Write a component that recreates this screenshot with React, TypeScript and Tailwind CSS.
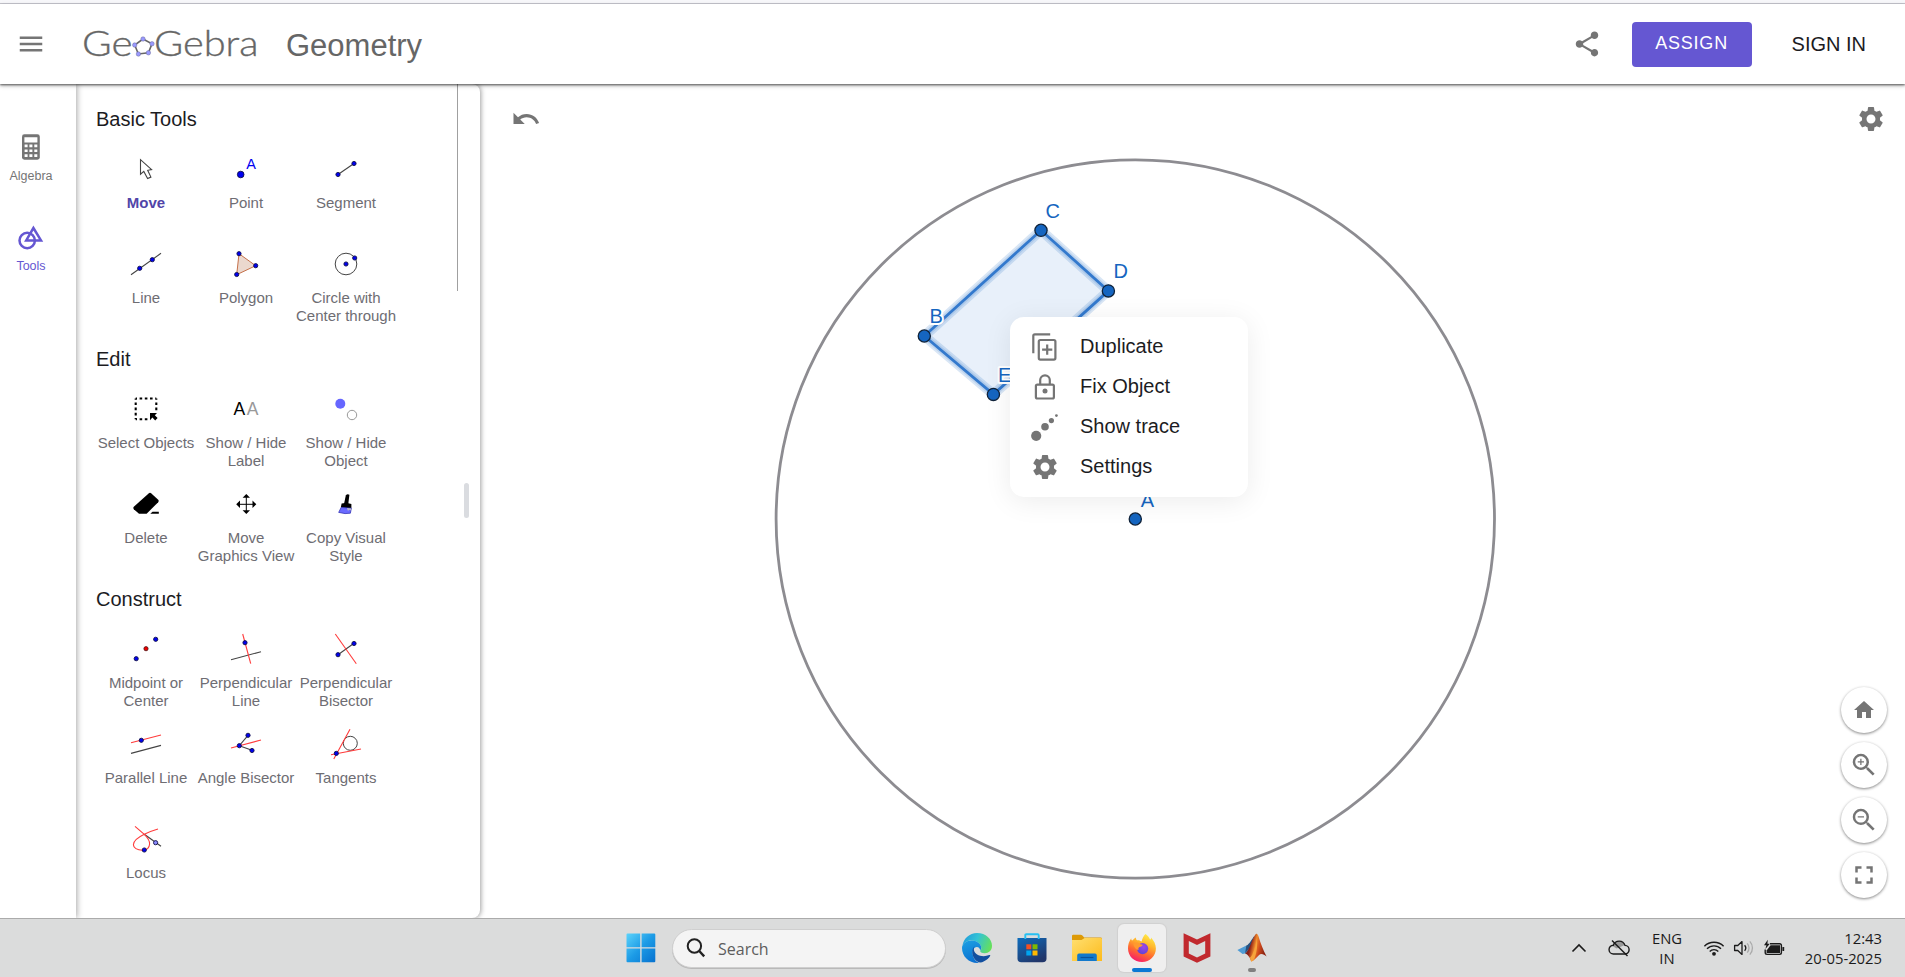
import type { ReactNode } from "react";
import {
  MdFullscreen,
  MdHome,
  MdMenu,
  MdSettings,
  MdShare,
  MdUndo,
  MdZoomIn,
  MdZoomOut,
} from "react-icons/md";

const RED = "#ff3b3b";
const DARK = "#444";

function Dot({ x, y, r = 2.1, fill = "#0000f0" }: { x: number; y: number; r?: number; fill?: string }) {
  return <circle cx={x} cy={y} r={r} fill={fill} stroke="#10104a" strokeWidth="0.9" />;
}

function Ln({ d, c = DARK }: { d: string; c?: string }) {
  return <path d={d} stroke={c} strokeWidth="1.1" fill="none" />;
}

type Tool = { label: string; icon: ReactNode; active?: boolean };

const basicTools: Tool[] = [
  {
    label: "Move",
    active: true,
    icon: (
      <path
        d="M-5.5 -9.3V5.2L-2.2 2.4L1.6 9.5L4.9 8.1L1.7 1.3L5.6 0.6Z"
        fill="#fff"
        stroke="#444"
        strokeWidth="1.1"
      />
    ),
  },
  {
    label: "Point",
    icon: (
      <>
        <Dot x={-5.3} y={5.5} r={3.3} />
        <text x="5" y="0.2" fontSize="14.5" textAnchor="middle" fill="#0000f0">
          A
        </text>
      </>
    ),
  },
  {
    label: "Segment",
    icon: (
      <>
        <Ln d="M-8 5.5L8 -5.5" />
        <Dot x={-8} y={5.5} />
        <Dot x={8} y={-5.5} />
      </>
    ),
  },
  {
    label: "Line",
    icon: (
      <>
        <Ln d="M-15 10.7L15 -10.7" />
        <Dot x={-6.3} y={4.3} />
        <Dot x={6.3} y={-4.3} />
      </>
    ),
  },
  {
    label: "Polygon",
    icon: (
      <>
        <path d="M-7 -10.3L9.7 1.7L-9.3 10.7Z" fill="#ebd8ce" stroke="#c4704a" strokeWidth="1" />
        <Dot x={-7} y={-10.3} />
        <Dot x={9.7} y={1.7} />
        <Dot x={-9.3} y={10.5} />
      </>
    ),
  },
  {
    label: "Circle with\nCenter through",
    icon: (
      <>
        <circle r="10.8" fill="none" stroke={DARK} strokeWidth="1" />
        <Dot x={0} y={0} />
        <Dot x={8.7} y={-6} />
      </>
    ),
  },
];

const editTools: Tool[] = [
  {
    label: "Select Objects",
    icon: (
      <>
        <path
          d="M-10.3 -10.5H10.3M-10.3 10.3H3M-10.3 -10.5V10.3M10.3 -10.5V3"
          fill="none"
          stroke="#000"
          strokeWidth="2.1"
          strokeDasharray="2.6 2.6"
          strokeDashoffset="1.3"
        />
        <path d="M4 4H11L8.8 6.2L11.6 9L9.2 11.4L6.4 8.6L4 11.2Z" fill="#000" />
      </>
    ),
  },
  {
    label: "Show / Hide\nLabel",
    icon: (
      <>
        <text x="-6.6" y="6.2" fontSize="17.5" textAnchor="middle" fill="#000">
          A
        </text>
        <text x="6.6" y="6.2" fontSize="17.5" textAnchor="middle" fill="#999">
          A
        </text>
      </>
    ),
  },
  {
    label: "Show / Hide\nObject",
    icon: (
      <>
        <circle cx="-5.7" cy="-5.3" r="5" fill="#6666ff" />
        <circle cx="6" cy="6" r="4.7" fill="none" stroke="#999" strokeWidth="1" />
      </>
    ),
  },
  {
    label: "Delete",
    icon: (
      <>
        <path
          d="M2.6 -10.6Q4 -11.8 5.4 -10.6L12.2 -4.2Q13.2 -3 12.2 -1.8L0.6 9.7H-7L-12.2 5.2Q-13.2 4 -12.2 2.8Z"
          fill="#000"
        />
        <path d="M4.3 9.7L6.5 7.7H12.8V9.7Z" fill="#000" />
      </>
    ),
  },
  {
    label: "Move\nGraphics View",
    icon: (
      <>
        <path d="M0.3 -7V7M-7 0.3H7" stroke="#000" strokeWidth="1" />
        <path
          d="M0.3 -10L4 -6.2H-3.4ZM0.3 10L4 6.2H-3.4ZM-9.8 0.2L-6 -3.5V3.9ZM10.3 0.2L6.5 -3.5V3.9Z"
          fill="#000"
        />
      </>
    ),
  },
  {
    label: "Copy Visual\nStyle",
    icon: (
      <>
        <path d="M-0.2 -8.4Q1.2 -10.6 3.4 -9.2L2.3 0H-2Z" fill="#000" />
        <path d="M-4.4 -0.6Q0 -1.6 5.4 0L5.4 4.4L-5.2 3.6Z" fill="#000" />
        <path d="M-4.8 3.4L5.3 4.2L4.4 9.2L-1 9.6L-7.3 8.4Z" fill="#6a6aff" stroke="#3535b8" strokeWidth="0.8" />
        <path d="M0.9 4L5.2 4.4L4.9 6.4L3.2 5.8L2 7Z" fill="#b8b8c8" />
      </>
    ),
  },
];

const constructTools: Tool[] = [
  {
    label: "Midpoint or\nCenter",
    icon: (
      <>
        <Dot x={9.7} y={-9.7} />
        <circle cx="0" cy="-0.3" r="2.1" fill="#f00000" stroke="#4a1010" strokeWidth="0.8" />
        <Dot x={-9.8} y={9.7} />
      </>
    ),
  },
  {
    label: "Perpendicular\nLine",
    icon: (
      <>
        <Ln d="M-15 10.7L15 2.7" />
        <Ln d="M-3.3 -15L4.7 14.7" c={RED} />
        <Dot x={-1} y={-6.3} />
      </>
    ),
  },
  {
    label: "Perpendicular\nBisector",
    icon: (
      <>
        <Ln d="M-8 5.7L8 -5.7" />
        <Ln d="M-10.7 -15L10.3 14.7" c={RED} />
        <Dot x={-8} y={5.7} />
        <Dot x={8} y={-5.5} />
      </>
    ),
  },
  {
    label: "Parallel Line",
    icon: (
      <>
        <Ln d="M-15 -1.3L15 -9" c={RED} />
        <Ln d="M-15 9.4L15 1.4" />
        <Dot x={-4.7} y={-3.7} />
      </>
    ),
  },
  {
    label: "Angle Bisector",
    icon: (
      <>
        <Ln d="M2 -8.7L-6.7 1.7L6 6.3" />
        <Ln d="M-15 4L15 -4" c={RED} />
        <Dot x={-6.7} y={1.7} />
        <Dot x={2} y={-8.7} />
        <Dot x={6} y={6.5} />
      </>
    ),
  },
  {
    label: "Tangents",
    icon: (
      <>
        <circle cx="4.3" cy="-0.7" r="7" fill="none" stroke={DARK} strokeWidth="1" />
        <Ln d="M-15 10.7L15 5M-12.2 15L4 -14.8" c={RED} />
        <Dot x={-9.7} y={9.4} />
      </>
    ),
  },
  {
    label: "Locus",
    icon: (
      <>
        <Ln d="M-1.7 -4.7L15 7.3" />
        <Ln
          d="M-11 -12.7L-1.7 -4.7C2.5 -0.6 3.8 2 3.6 5C3.3 9.2 0.8 11.2 -3.5 11.2C-9 11.2 -12.6 8.8 -12.6 5.8C-12.6 2.2 -8.5 -1.4 -1.7 -4.7C3 -7 7 -8.6 12 -10"
          c={RED}
        />
        <Dot x={9.6} y={3.7} fill="#8a8aff" r={2.1} />
        <Dot x={-1.7} y={11} />
      </>
    ),
  },
];

function Section({ title, tools }: { title: string; tools: Tool[] }) {
  return (
    <section className="mb-2.5">
      <h2 className="mb-5 text-[20px] leading-5 text-[#1c1c1f]">{title}</h2>
      <div className="grid w-[300px] grid-cols-3">
        {tools.map((t) => (
          <div key={t.label} className="flex h-[95px] flex-col items-center">
            <svg width="40" height="40" viewBox="-20 -20 40 40">
              {t.icon}
            </svg>
            <span
              className={
                "mt-[5px] text-center text-[15px] leading-[18px] whitespace-pre " +
                (t.active ? "font-bold text-[#5145a8]" : "text-[#6e6d73]")
              }
            >
              {t.label}
            </span>
          </div>
        ))}
      </div>
    </section>
  );
}

function Logo() {
  const pts: [number, number][] = [
    [143, 39],
    [152, 43.8],
    [148.4, 52.8],
    [138.4, 54],
    [134.7, 45],
  ];
  return (
    <svg className="ml-[33px] shrink-0" width="186" height="50" viewBox="79 19 186 50">
      <g fill="#666" stroke="#666" strokeWidth="0.35" fontFamily="Lato, sans-serif" fontWeight="300" fontSize="34.5">
        <text x="82" y="55.5" textLength="50.5" lengthAdjust="spacingAndGlyphs">
          Ge
        </text>
        <text x="154" y="55.5" textLength="104.5" lengthAdjust="spacingAndGlyphs">
          Gebra
        </text>
      </g>
      <polygon points={pts.map((p) => p.join(",")).join(" ")} fill="none" stroke="#666" strokeWidth="1.6" />
      {pts.map(([x, y]) => (
        <circle key={x} cx={x} cy={y} r="2.2" fill="#9999ff" stroke="#6a6a9a" strokeWidth="0.5" />
      ))}
    </svg>
  );
}

function Header() {
  return (
    <header className="relative z-20 flex h-20 shrink-0 items-center bg-white pb-px pl-4 text-[#666] shadow-[0_1px_2px_rgba(0,0,0,0.55),0_2px_4px_rgba(0,0,0,0.25)]">
      <MdMenu size={30} className="text-[#757575]" />
      <div className="flex items-center">
        <Logo />
        <span className="ml-[21px] pt-1 text-[31px] leading-9">Geometry</span>
      </div>
      <div className="ml-auto flex items-center">
        <MdShare size={30} className="mr-[30px] text-[#757575]" />
        <button className="mt-0.5 h-[45px] w-[120px] rounded bg-[#6557d2] pb-0.5 text-[18px] tracking-[0.8px] text-white">
          ASSIGN
        </button>
        <span className="mr-[39px] ml-10 text-[20px] text-[#1c1c1f]">SIGN IN</span>
      </div>
    </header>
  );
}

function NavRail() {
  return (
    <nav className="relative z-10 flex w-[76px] shrink-0 flex-col gap-[38px] bg-white pt-12 pr-[14px] text-center text-[12.5px] leading-4 shadow-[1px_0_6px_rgba(0,0,0,0.35)]">
      <div className="flex flex-col items-center text-[#757575]">
        <svg width="30" height="30" viewBox="0 0 30 30">
          <rect x="6" y="2.3" width="17.8" height="25.4" rx="2.4" fill="#757575" />
          <path
            d="M8.4 5.2h13v5.3h-13zM8.6 12.6h3v2.6h-3zM13.4 12.6h3v2.6h-3zM18.3 12.6h3v2.6h-3zM8.6 17.4h3v2.6h-3zM13.4 17.4h3v2.6h-3zM18.3 17.4h3v2.6h-3zM8.6 22.3h3v2.6h-3zM13.4 22.3h3v2.6h-3zM18.3 22.3h3v2.6h-3z"
            fill="#fff"
          />
        </svg>
        <span className="mt-1.5">Algebra</span>
      </div>
      <div className="flex flex-col items-center text-[#6557d2]">
        <svg width="30" height="30" viewBox="0 0 30 30" fill="none" stroke="#6557d2" strokeWidth="2.5">
          <circle cx="11.2" cy="18.5" r="7.7" />
          <path d="M17.4 6L25 18.4H10.2Z" />
        </svg>
        <span className="mt-1.5">Tools</span>
      </div>
    </nav>
  );
}

function ToolPanel() {
  return (
    <aside className="z-[5] flex w-[404px] shrink-0 justify-between rounded-r-lg bg-white pl-5 shadow-[1px_0_5px_rgba(0,0,0,0.38)]">
      <div className="pt-[25px]">
        <Section title="Basic Tools" tools={basicTools} />
        <Section title="Edit" tools={editTools} />
        <Section title="Construct" tools={constructTools} />
      </div>
      <div className="flex pr-[11px]">
        <div className="mr-1.5 h-[207px] w-[1.5px] bg-[#a0a0a0]" />
        <div className="mt-[399px] h-[35px] w-[5px] rounded-full bg-[#dadce0]" />
      </div>
    </aside>
  );
}

const points = [
  { name: "A", x: 1135.3, y: 519, lx: 1140.8, ly: 507 },
  { name: "B", x: 924.3, y: 336, lx: 929.5, ly: 322.7 },
  { name: "C", x: 1041, y: 230.3, lx: 1045.5, ly: 217.7 },
  { name: "D", x: 1108.4, y: 290.9, lx: 1113.5, ly: 277.5 },
  { name: "E", x: 993.4, y: 394.4, lx: 998, ly: 382 },
];

function Construction() {
  const poly = "924.3,336 1041,230.3 1108.4,290.9 993.4,394.4";
  return (
    <svg className="absolute inset-0" width="1425" height="834" viewBox="480 84 1425 834">
      <circle cx="1135.3" cy="519" r="359.2" fill="none" stroke="#8d8c91" strokeWidth="2.8" />
      <polygon points={poly} fill="#e8f0fa" />
      <polygon points={poly} fill="none" stroke="#1565c0" strokeOpacity="0.16" strokeWidth="10" strokeLinejoin="round" />
      <polygon points={poly} fill="none" stroke="#1565c0" strokeOpacity="0.14" strokeWidth="6" strokeLinejoin="round" />
      <polygon points={poly} fill="none" stroke="#3379cd" strokeWidth="2.8" />
      {points.map((p) => (
        <g key={p.name}>
          <circle cx={p.x} cy={p.y} r="6.1" fill="#1565c0" stroke="#10233a" strokeWidth="1.3" />
          <text
            x={p.lx}
            y={p.ly}
            fontSize="20"
            fill="#1565c0"
            stroke="#fff"
            strokeWidth="4"
            strokeLinejoin="round"
            paintOrder="stroke"
          >
            {p.name}
          </text>
        </g>
      ))}
    </svg>
  );
}

const menuItems: { label: string; icon: ReactNode }[] = [
  {
    label: "Duplicate",
    icon: (
      <g fill="none" stroke="#757575" strokeWidth="2.2">
        <path d="M-11.7 6.3V-11.2Q-11.7 -12.7 -10.2 -12.7H5.2" />
        <rect x="-6.2" y="-7" width="16.6" height="19.6" rx="1.5" />
        <path d="M2.2 -2.4V7.8M-2.9 2.7H7.3" />
      </g>
    ),
  },
  {
    label: "Fix Object",
    icon: (
      <g fill="none" stroke="#757575" strokeWidth="2.2">
        <rect x="-9.1" y="-2.4" width="18" height="13.9" rx="1.5" />
        <path d="M-4.8 -2.4V-6.9A4.8 4.8 0 0 1 4.8 -6.9V-2.4" />
        <circle cx="0" cy="4" r="2.5" fill="#757575" stroke="none" />
      </g>
    ),
  },
  {
    label: "Show trace",
    icon: (
      <g fill="#757575">
        <circle cx="-8.8" cy="8.8" r="5.1" />
        <circle cx="0" cy="-0.2" r="3.8" />
        <circle cx="6.4" cy="-6.4" r="2.6" />
        <circle cx="11.4" cy="-11.4" r="1.4" />
      </g>
    ),
  },
];

function ContextMenu() {
  return (
    <ul className="absolute top-[233px] left-[530px] h-[180px] w-[238px] rounded-[14px] bg-white pt-[9px] pb-[11px] text-[20px] text-[#1c1c1f] shadow-[0_4px_28px_rgba(0,0,0,0.08)]">
      {menuItems.map((m) => (
        <li key={m.label} className="flex h-10 items-center pl-5">
          <svg className="relative top-px" width="30" height="30" viewBox="-15 -15 30 30">
            {m.icon}
          </svg>
          <span className="ml-5">{m.label}</span>
        </li>
      ))}
      <li className="flex h-10 items-center pl-5">
        <MdSettings size={30} className="relative top-px text-[#757575]" />
        <span className="ml-5">Settings</span>
      </li>
    </ul>
  );
}

function GraphicsView() {
  const buttons = [
    <MdHome key="home" size={24} />,
    <MdZoomIn key="in" size={30} />,
    <MdZoomOut key="out" size={30} />,
    <MdFullscreen key="full" size={30} />,
  ];
  return (
    <main className="relative flex flex-1 flex-col justify-between text-[#757575]">
      <Construction />
      <div className="relative flex justify-between pt-5 pr-[19px] pl-[31px]">
        <MdUndo size={30} />
        <MdSettings size={30} />
      </div>
      <div className="relative flex flex-col items-end gap-[9px] pr-[18px] pb-5">
        {buttons.map((b) => (
          <button
            key={b.key}
            className="flex size-[46px] items-center justify-center rounded-full bg-white shadow-[0_1px_3px_rgba(0,0,0,0.48)]"
          >
            {b}
          </button>
        ))}
      </div>
      <ContextMenu />
    </main>
  );
}

function WindowsIcon() {
  return (
    <svg width="30" height="30" viewBox="0 0 30 30">
      <defs>
        <linearGradient id="win" x1="0" y1="0" x2="1" y2="1">
          <stop offset="0" stopColor="#5cd3fb" />
          <stop offset="0.5" stopColor="#1c9be6" />
          <stop offset="1" stopColor="#0671cf" />
        </linearGradient>
      </defs>
      <path
        d="M1.5 0.5H14.2V14.2H0.5V1.5Q0.5 0.5 1.5 0.5ZM15.6 0.5H28.3Q29.3 0.5 29.3 1.5V14.2H15.6ZM0.5 15.6H14.2V29.3H1.5Q0.5 29.3 0.5 28.3ZM15.6 15.6H29.3V28.3Q29.3 29.3 28.3 29.3H15.6Z"
        fill="url(#win)"
      />
    </svg>
  );
}

function EdgeIcon() {
  return (
    <svg width="30" height="30" viewBox="0 0 30 30">
      <defs>
        <linearGradient id="edgeTop" x1="0" y1="0.3" x2="1" y2="0.6">
          <stop offset="0" stopColor="#219ddb" />
          <stop offset="0.45" stopColor="#33c3d5" />
          <stop offset="1" stopColor="#66e05a" />
        </linearGradient>
        <linearGradient id="edgeLeft" x1="0.3" y1="0" x2="0.6" y2="1">
          <stop offset="0" stopColor="#1b9de2" />
          <stop offset="1" stopColor="#0b6fd0" />
        </linearGradient>
      </defs>
      <path
        d="M0.4 13C1.5 5.5 7.5 0 15 0C24 0 30 6.2 30 12.8C30 17.5 26.6 20.2 22.8 20.2C19.6 20.2 18.1 19 18.2 18C18.3 17.2 19.3 16.8 19.3 14.9C19.3 11 14.5 7.6 9.6 7.6C5.6 7.6 2 9.6 0.4 13Z"
        fill="url(#edgeTop)"
      />
      <path
        d="M0 15C0 10.8 4.4 7.4 9.6 7.4C14.6 7.4 19.3 10.8 19.3 14.9L18.4 17.6C17 11.8 11.8 13.6 10.8 18C9.8 23 13 28.4 17.4 29.8C8 31 0 24 0 15Z"
        fill="url(#edgeLeft)"
      />
      <path
        d="M13 12.6C9.6 16 9.4 21.6 12.6 26C15 29.2 18.6 30.6 21.6 28.4C24.8 27.2 27 25.2 28.2 22.8C28.6 22.1 28 21.7 27.3 22C20.6 24.9 12.6 22 11.9 17C11.7 15.4 12 13.8 13 12.6Z"
        fill="#124f9f"
      />
    </svg>
  );
}

function StoreIcon() {
  return (
    <svg width="30" height="30" viewBox="0 0 30 30">
      <defs>
        <linearGradient id="store" x1="0" y1="0" x2="0.6" y2="1">
          <stop offset="0" stopColor="#0d6dbd" />
          <stop offset="1" stopColor="#21366a" />
        </linearGradient>
      </defs>
      <path d="M0.5 5H29.5V25.5Q29.5 29.3 25.7 29.3H4.3Q0.5 29.3 0.5 25.5Z" fill="url(#store)" />
      <path d="M8.3 6V2.2Q8.3 1.2 9.3 1.2H20.7Q21.7 1.2 21.7 2.2V6" fill="none" stroke="#27c0f2" strokeWidth="1.9" />
      <rect x="9.3" y="11.3" width="5" height="5" fill="#f25022" />
      <rect x="15.5" y="11.3" width="5" height="5" fill="#7fba00" />
      <rect x="9.3" y="17.5" width="5" height="5" fill="#00a4ef" />
      <rect x="15.5" y="17.5" width="5" height="5" fill="#ffb900" />
    </svg>
  );
}

function FolderIcon() {
  return (
    <svg width="30" height="30" viewBox="0 0 30 30">
      <defs>
        <linearGradient id="folder" x1="0" y1="0" x2="1" y2="1">
          <stop offset="0" stopColor="#ffdf70" />
          <stop offset="1" stopColor="#fdbb1c" />
        </linearGradient>
      </defs>
      <path d="M0 9V3Q0 1.8 1.2 1.8H8.6Q9.6 1.8 10.4 2.6L12.2 4.4H28.6Q30 4.4 30 5.8V9Z" fill="#dd9a07" />
      <path d="M0 7H9.5L12.6 4.9H28.8Q30 4.9 30 6.1V28H0Z" fill="url(#folder)" />
      <path d="M5.2 28V22.4Q5.2 20.6 7 20.6H23Q24.8 20.6 24.8 22.4V28Z" fill="#1279cc" />
      <path d="M8.6 24.5H21.4" stroke="#0a529b" strokeWidth="1.2" />
    </svg>
  );
}

function FirefoxIcon() {
  return (
    <svg width="30" height="30" viewBox="0 0 30 30">
      <defs>
        <linearGradient id="ff" x1="0.75" y1="0" x2="0.3" y2="1">
          <stop offset="0" stopColor="#fff04a" />
          <stop offset="0.35" stopColor="#ffb52c" />
          <stop offset="0.65" stopColor="#ff6a30" />
          <stop offset="1" stopColor="#f5176d" />
        </linearGradient>
        <radialGradient id="ffIn" cx="0.6" cy="0.35" r="0.7">
          <stop offset="0" stopColor="#a044e8" />
          <stop offset="1" stopColor="#5b45d6" />
        </radialGradient>
      </defs>
      <path
        d="M18.6 1C20.6 2.4 22.3 4.6 23 6.4C23.9 6.6 24.2 5.6 24 4.6C26.8 7.6 28.9 11.4 28.9 15.6C28.9 23.2 22.8 29 15.1 29C7.2 29 1 23 1 15.4C1 11.6 2 8.4 4.2 5.2C4.2 6.4 4.6 7.2 5.2 7.6C6.4 6.2 7.8 5 9 4.4C8.8 5.6 9.2 6.6 10 7.2C12 6.9 13.6 7.6 14.6 8.6C15.2 6 16.4 2.8 18.6 1Z"
        fill="url(#ff)"
      />
      <circle cx="15.6" cy="15.6" r="5.6" fill="url(#ffIn)" />
      <path
        d="M6.2 10.4C9 9.4 11.4 9.6 13.4 11.2L15.8 11.8C15.6 13 14 13.8 12.6 14C11.4 14.4 11.2 15.6 11.6 17C9.4 16.6 7 14.6 6.2 10.4Z"
        fill="#ff9a2e"
      />
    </svg>
  );
}

function McAfeeIcon() {
  return (
    <svg width="30" height="30" viewBox="0 0 30 30">
      <path
        d="M1.6 0.3L15 6.4L28.4 0.3V23.6L15 29.8L1.6 23.6ZM6.8 8V20.4L15 24.4L23.2 20.4V8L15 12Z"
        fill="#c1292e"
        fillRule="evenodd"
      />
    </svg>
  );
}

function MatlabIcon() {
  return (
    <svg width="30" height="30" viewBox="0 0 30 30">
      <defs>
        <linearGradient id="ml" x1="0" y1="0" x2="1" y2="0.3">
          <stop offset="0" stopColor="#3d1a24" />
          <stop offset="0.35" stopColor="#8f2118" />
          <stop offset="0.55" stopColor="#f08a2c" />
          <stop offset="0.75" stopColor="#cf4a1c" />
          <stop offset="1" stopColor="#8c2312" />
        </linearGradient>
      </defs>
      <path d="M0.4 17L9.4 12.6L12.6 15.4L8 20.4L5.6 21Z" fill="#4f9bd4" />
      <path d="M9.4 12.6C12.6 11.2 15 5.6 17.4 3L14.6 12.8L8 20.4Z" fill="#28527f" />
      <path
        d="M8 20.6C12 18.6 15 5.4 18.8 1C20 0 21 1.6 21.8 4.2C23.6 10.6 26.2 17 29.6 23.6C26.6 21 24 20.2 21.6 22.4C18.8 24.8 17 28 14.2 28.6C13 25.4 11.6 21.6 8 20.6Z"
        fill="url(#ml)"
      />
      <path d="M13 24.8C16.6 22 18.6 12 20 5.6C20.6 12 20 19 17.6 25.2C16.6 26.8 15.4 28.2 14.2 28.6Z" fill="#f6a43c" />
    </svg>
  );
}

function Taskbar() {
  return (
    <footer className="flex h-[59px] shrink-0 items-center border-t border-[#ababab] bg-[#dbdcdc] pl-[616px] font-['Open_Sans','Noto_Sans',sans-serif] text-[#1b1b1b]">
      <div className="flex w-[49px] justify-center">
        <WindowsIcon />
      </div>
      <div className="ml-[7px] flex h-[39px] w-[274px] items-center rounded-full border border-[#cfcfcf] bg-[#f4f4f4] pl-[13px] shadow-[0_1px_0_#b9b9b9]">
        <svg width="20" height="20" viewBox="0 0 20 20" fill="none" stroke="#222" strokeWidth="2">
          <circle cx="8.4" cy="8" r="6.7" />
          <path d="M13 12.8L18.2 18.4" strokeWidth="2.4" />
        </svg>
        <span className="ml-3 pt-px text-[16px] text-[#5d5d5d]">Search</span>
      </div>
      <div className="ml-[7px] flex gap-[7px]">
        {[EdgeIcon, StoreIcon, FolderIcon].map((Icon, i) => (
          <div key={i} className="flex size-12 items-center justify-center">
            <Icon />
          </div>
        ))}
        <div className="flex size-12 flex-col items-center justify-between rounded-md bg-[#efefef] pt-[9px] shadow-[0_0_1px_1px_#d0d0d0]">
          <FirefoxIcon />
          <div className="h-1 w-5 rounded-full bg-[#0a78d4]" />
        </div>
        <div className="flex size-12 items-center justify-center">
          <McAfeeIcon />
        </div>
        <div className="flex size-12 flex-col items-center justify-between pt-[9px]">
          <MatlabIcon />
          <div className="h-1 w-2 rounded-full bg-[#808080]" />
        </div>
      </div>
      <div className="ml-auto flex items-center pr-[23px] pb-px text-[14.8px] leading-5">
        <div className="flex w-10 justify-center">
          <svg width="16" height="10" viewBox="0 0 16 10" fill="none" stroke="#1b1b1b" strokeWidth="1.6">
            <path d="M1.5 8.5L8 2L14.5 8.5" />
          </svg>
        </div>
        <div className="flex w-10 justify-center">
          <svg width="22" height="18" viewBox="0 0 22 18" fill="none" stroke="#1b1b1b" strokeWidth="1.4">
            <path d="M5.4 5.6A6 6 0 0 1 16.4 6.2L8.6 9.6L4.4 7Z" fill="#999" stroke="none" />
            <path d="M5.6 15H16.6A4.3 4.3 0 0 0 17 6.4A6.2 6.2 0 0 0 5.3 6.2A4.4 4.4 0 0 0 5.6 15Z" />
            <path d="M4 1.5L19.5 17" />
          </svg>
        </div>
        <div className="w-14 text-center">
          ENG
          <br />
          IN
        </div>
        <div className="flex w-[38px] justify-center">
          <svg width="22" height="18" viewBox="0 0 22 18" fill="none" stroke="#1b1b1b" strokeWidth="1.4">
            <path d="M1.4 7.2A13.6 13.6 0 0 1 20.6 7.2M4 9.8A9.9 9.9 0 0 1 18 9.8M6.7 12.4A6.1 6.1 0 0 1 15.3 12.4" />
            <circle cx="11" cy="14.8" r="1.9" fill="#1b1b1b" stroke="none" />
          </svg>
        </div>
        <div className="flex w-[22px] justify-center">
          <svg width="22" height="18" viewBox="0 0 22 18" fill="none" stroke="#1b1b1b" strokeWidth="1.3">
            <path d="M1.6 6.5H4.8L9 2.6V15.4L4.8 11.5H1.6Z" strokeLinejoin="round" />
            <path d="M11.6 6.3A4 4 0 0 1 11.6 11.7" />
            <path d="M14.2 4.4A6.8 6.8 0 0 1 14.2 13.6M16.8 2.4A9.6 9.6 0 0 1 16.8 15.6" stroke="#aaa" />
          </svg>
        </div>
        <div className="flex w-[38px] justify-center">
          <svg width="22" height="18" viewBox="0 0 22 18">
            <path
              d="M7 4.8H16.6Q18.4 4.8 18.4 6.6V13.6Q18.4 15.4 16.6 15.4H4Q2.2 15.4 2.2 13.6V10.4"
              fill="none"
              stroke="#1b1b1b"
              strokeWidth="1.4"
            />
            <path d="M7.6 6.2H17V14H3.6V11.4Z" fill="#1b1b1b" />
            <rect x="19.4" y="8" width="1.8" height="4" rx="0.6" fill="#1b1b1b" />
            <path d="M4.8 0.8L1 6.2H3.4L2.4 10L6.8 4.8H4.4Z" fill="#1b1b1b" />
          </svg>
        </div>
        <div className="w-[89px] text-right">
          12:43
          <br />
          20-05-2025
        </div>
      </div>
    </footer>
  );
}

export default function App() {
  return (
    <div className="flex h-[977px] w-[1905px] flex-col overflow-hidden bg-white font-['Liberation_Sans',Arial,sans-serif]">
      <div className="h-1 shrink-0 border-b border-[#c9c9d1] bg-[#f7f7fa]" />
      <Header />
      <div className="flex min-h-0 flex-1 overflow-hidden">
        <NavRail />
        <ToolPanel />
        <GraphicsView />
      </div>
      <Taskbar />
    </div>
  );
}
